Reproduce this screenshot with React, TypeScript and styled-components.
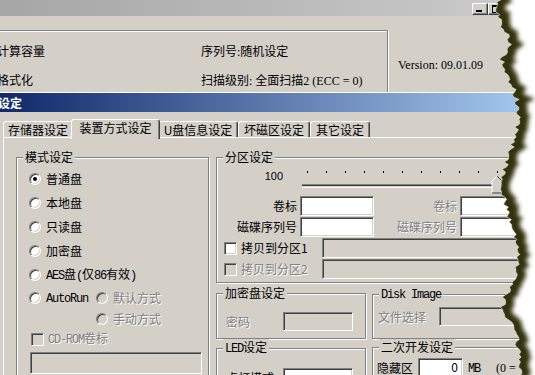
import React from "react";
import styled, { createGlobalStyle, css } from "styled-components";

const CJK = `"Noto Sans CJK SC", "Liberation Sans", sans-serif`;
const SERIF = `"Liberation Serif", "Noto Sans CJK SC", serif`;

const GlobalStyle = createGlobalStyle`
  html, body { margin: 0; padding: 0; background: #fff; overflow: hidden; }
  #root { width: 535px; height: 375px; }
`;

const dim = css`
  color: #808080;
  text-shadow: 1px 1px 0 #fff;
`;

const Screen = styled.div`
  position: relative;
  width: 535px;
  height: 375px;
  overflow: hidden;
  background: #d4d0c8;
  display: flex;
  flex-direction: column;
  font-family: ${CJK};
  font-size: 12px;
  line-height: 16px;
  color: #000;
`;

/* ---- background window ---- */
const AppTitle = styled.div`
  flex-shrink: 0;
  height: 16px;
  background: linear-gradient(to right, #a6a6a6, #c8c8c8 90%);
  display: flex;
  justify-content: flex-end;
  align-items: flex-start;
  padding: 3px 31px 0 0;
  box-sizing: border-box;
`;

const CaptionButton = styled.div<{ $kind: "min" | "max" }>`
  box-sizing: border-box;
  width: 16px;
  height: 12px;
  background: #d4d0c8;
  border: 1px solid;
  border-color: #fff #404040 #404040 #fff;
  box-shadow: inset -1px -1px 0 #808080;
  position: relative;
  &::after {
    content: "";
    position: absolute;
    ${({ $kind }) =>
      $kind === "min"
        ? css`left: 3px; bottom: 2px; width: 6px; height: 2px; background: #000;`
        : css`left: 3px; top: 1px; width: 6px; height: 5px; border: 1px solid #000; border-top-width: 2px;`}
  }
`;

const InfoArea = styled.div`
  flex-shrink: 0;
  height: 76px;
  display: flex;
  align-items: flex-start;
  font-family: ${SERIF};
`;

const InfoFrame = styled.div`
  box-sizing: border-box;
  margin: 14px 0 0 -9px;
  width: 397px;
  height: 62px;
  border: 1px solid #808080;
  border-bottom: none;
  box-shadow: inset 1px 1px 0 #fff, 1px 0 0 #fff;
  display: grid;
  grid-template-columns: 204px 1fr;
  row-gap: 13px;
  align-content: start;
  padding: 13px 0 0 5px;
  white-space: nowrap;
`;

const Version = styled.div`
  margin: 41px 0 0 10px;
  white-space: nowrap;
`;

/* ---- dialog ---- */
const Dialog = styled.div`
  flex: 1;
  display: flex;
  flex-direction: column;
  border-top: 1px solid #fff;
  min-height: 0;
`;

const DialogCaption = styled.div`
  flex-shrink: 0;
  height: 19px;
  background: linear-gradient(to right, #10286a, #a6caf0);
  color: #fff;
  font-weight: bold;
  line-height: 19px;
  text-indent: -2px;
`;

const DialogBody = styled.div`
  flex: 1;
  display: flex;
  flex-direction: column;
  padding: 7px 0 0 3px;
  min-height: 0;
`;

const TabRow = styled.div`
  display: flex;
  align-items: flex-end;
  height: 18px;
  flex-shrink: 0;
`;

const Tab = styled.div<{ $w: number; $active?: boolean }>`
  box-sizing: border-box;
  width: ${({ $w, $active }) => ($active ? $w + 4 : $w)}px;
  height: ${({ $active }) => ($active ? 20 : 16)}px;
  margin: ${({ $active }) => ($active ? "0 -2px -2px" : "0")};
  position: relative;
  z-index: ${({ $active }) => ($active ? 1 : 0)};
  background: #d4d0c8;
  border: 1px solid;
  border-bottom: none;
  border-color: #fff #404040 transparent #fff;
  box-shadow: inset -1px 0 0 #808080;
  border-radius: 3px 3px 0 0;
  text-align: center;
  line-height: 16px;
  white-space: nowrap;
`;

const Panel = styled.div`
  flex: 1;
  border-top: 1px solid #fff;
  border-left: 1px solid #fff;
  margin-right: -100px;
  padding: 11px 0 0 12px;
  display: grid;
  grid-template-columns: 193px 1fr;
  column-gap: 7px;
  align-items: start;
`;

const Group = styled.fieldset<{ $h: number }>`
  box-sizing: border-box;
  margin: 0;
  padding: 0;
  min-width: 0;
  height: ${({ $h }) => $h}px;
  border: 1px solid #808080;
  box-shadow: inset 1px 1px 0 #fff, 1px 1px 0 #fff;
`;

const Legend = styled.legend`
  margin-left: 6px;
  padding: 0 2px;
  background: #d4d0c8;
  line-height: 16px;
  white-space: nowrap;
`;

const Mono = styled.span`
  font-family: "Liberation Mono", monospace;
  font-size: 12px;
  letter-spacing: -1.2px;
`;

const Text = styled.span<{ $disabled?: boolean }>`
  white-space: nowrap;
  ${({ $disabled }) => $disabled && dim}
`;

/* mode group */
const ModeBody = styled.div`
  display: flex;
  flex-direction: column;
  padding: 2px 6px 0 12px;
`;

const OptionRow = styled.div<{ $h?: number; $indent?: number }>`
  display: flex;
  align-items: center;
  height: ${({ $h }) => $h ?? 24}px;
  padding-left: ${({ $indent }) => $indent ?? 0}px;
  white-space: nowrap;
`;

const Radio = styled.span<{ $checked?: boolean; $disabled?: boolean; $gap?: number }>`
  box-sizing: border-box;
  flex-shrink: 0;
  width: 12px;
  height: 12px;
  border-radius: 50%;
  margin-left: ${({ $gap }) => $gap ?? 0}px;
  margin-right: 5px;
  background: ${({ $disabled }) => ($disabled ? "#d4d0c8" : "#fff")};
  border: 1px solid;
  border-color: #808080 #fff #fff #808080;
  box-shadow: inset 1px 1px 0 #404040, inset -1px -1px 0 #d4d0c8;
  display: flex;
  align-items: center;
  justify-content: center;
  &::after {
    content: "";
    width: 4px;
    height: 4px;
    border-radius: 50%;
    background: #000;
    display: ${({ $checked }) => ($checked ? "block" : "none")};
  }
`;

const Check = styled.span<{ $disabled?: boolean }>`
  box-sizing: border-box;
  flex-shrink: 0;
  width: 13px;
  height: 13px;
  margin-right: 4px;
  background: ${({ $disabled }) => ($disabled ? "#d4d0c8" : "#fff")};
  border: 1px solid;
  border-color: #808080 #fff #fff #808080;
  box-shadow: inset 1px 1px 0 #404040, inset -1px -1px 0 #d4d0c8;
`;

const Edit = styled.div<{ $w: number; $h?: number; $disabled?: boolean }>`
  box-sizing: border-box;
  flex-shrink: 0;
  width: ${({ $w }) => $w}px;
  height: ${({ $h }) => $h ?? 20}px;
  background: ${({ $disabled }) => ($disabled ? "#d4d0c8" : "#fff")};
  border: 1px solid;
  border-color: #808080 #fff #fff #808080;
  box-shadow: inset 1px 1px 0 #404040, inset -1px -1px 0 #d4d0c8;
  text-align: right;
  padding: 0 4px;
  line-height: 16px;
`;

const CdRomBox = styled(Edit)`
  margin: 3px 0 0 1px;
`;

/* right column */
const RightCol = styled.div`
  display: flex;
  flex-direction: column;
`;

const PartBody = styled.div`
  display: flex;
  flex-direction: column;
  padding-left: 5px;
`;

const SliderRow = styled.div`
  display: flex;
  align-items: flex-start;
  height: 31px;
`;

const SliderValue = styled.span`
  width: 61px;
  padding-top: 3px;
  text-align: right;
  font-family: "Liberation Sans", sans-serif;
  font-size: 11px;
`;

const SliderSvg = styled.svg`
  margin-left: 15px;
  flex-shrink: 0;
`;

const FieldRow = styled.div`
  display: flex;
  align-items: center;
  height: 20px;
  margin-bottom: 1px;
`;

const FieldLabel = styled.span<{ $w: number; $disabled?: boolean }>`
  width: ${({ $w }) => $w}px;
  flex-shrink: 0;
  box-sizing: border-box;
  text-align: right;
  padding-right: 3px;
  white-space: nowrap;
  ${({ $disabled }) => $disabled && dim}
`;

const CopyLabel = styled.div`
  display: flex;
  align-items: center;
  width: 98px;
  padding-left: 2px;
  flex-shrink: 0;
`;

const PairRow = styled.div`
  display: grid;
  grid-template-columns: 150px 1fr;
  column-gap: 6px;
`;

const SmallBody = styled.div<{ $top: number; $left: number }>`
  display: flex;
  align-items: center;
  padding: ${({ $top, $left }) => `${$top}px 0 0 ${$left}px`};
  white-space: nowrap;
`;

const SideLabel = styled.span<{ $w: number; $disabled?: boolean }>`
  width: ${({ $w }) => $w}px;
  flex-shrink: 0;
  white-space: nowrap;
  ${({ $disabled }) => $disabled && dim}
`;

const Unit = styled.span`
  margin-left: 5px;
  white-space: nowrap;
`;

const Hint = styled.span`
  margin-left: 16px;
  font-family: ${SERIF};
  white-space: nowrap;
`;

const TearSvg = styled.svg`
  position: absolute;
  top: 0;
  right: 0;
  pointer-events: none;
`;

const tabs = [
  { label: "存储器设定", w: 70 },
  { label: "装置方式设定", w: 85, active: true },
  { label: "U盘信息设定", w: 80 },
  { label: "坏磁区设定", w: 72 },
  { label: "其它设定", w: 60 },
];

// x position of the torn edge along y (page coordinates)
const tearCtrl: [number, number][] = [
  [0, 500], [15, 497], [30, 505], [45, 509], [60, 502], [75, 507], [90, 514],
  [110, 519], [130, 516], [150, 511], [170, 504], [185, 499], [200, 504],
  [220, 510], [240, 515], [260, 518], [280, 514], [295, 506], [308, 501],
  [325, 512], [345, 518], [365, 521], [375, 519],
];

function tearPoints(offsetX: number) {
  const pts: string[] = [];
  for (let y = -3; y <= 378; y += 2.5) {
    let i = 0;
    while (i < tearCtrl.length - 2 && tearCtrl[i + 1][0] < y) i++;
    const [y0, x0] = tearCtrl[i];
    const [y1, x1] = tearCtrl[i + 1];
    const t = Math.min(1, Math.max(0, (y - y0) / (y1 - y0)));
    const h = Math.sin(y * 12.9898) * 43758.5453;
    const r = h - Math.floor(h);
    pts.push(`${(x0 + (x1 - x0) * t + (r - 0.5) * 6 - offsetX).toFixed(1)},${y}`);
  }
  return pts;
}

const TornEdge = () => {
  const left = 465;
  const pts = tearPoints(left);
  const region = `M${pts.join(" L")} L80,378 L80,-3 Z`;
  return (
    <TearSvg width={70} height={375} viewBox="0 0 70 375">
      <defs>
        <clipPath id="paper">
          <path d={region} />
        </clipPath>
        <filter id="soft" x="-50%" y="-5%" width="200%" height="110%">
          <feGaussianBlur stdDeviation="2.2" />
        </filter>
      </defs>
      <g clipPath="url(#paper)">
        <rect x="0" y="0" width="70" height="375" fill="#fff" />
        <polyline
          points={pts.join(" ")}
          fill="none"
          stroke="#33310c"
          strokeWidth="11"
          transform="translate(3,0)"
          filter="url(#soft)"
        />
      </g>
      <polyline points={pts.join(" ")} fill="none" stroke="#e9e8e2" strokeWidth="0.8" opacity="0.6" />
    </TearSvg>
  );
};

const Slider = () => {
  const ticks = Array.from({ length: 11 }, (_, i) => 9 + i * 19);
  return (
    <SliderSvg width={230} height={30} viewBox="0 0 230 30">
      {ticks.map((x) => (
        <rect key={x} x={x} y={6} width={1} height={2} fill="#000" />
      ))}
      <rect x={4} y={19} width={191} height={1} fill="#808080" />
      <rect x={4} y={20} width={191} height={1} fill="#404040" />
      <rect x={4} y={22} width={191} height={1} fill="#fff" />
      <path d="M194,16 L199,11 L204,16 L204,28 L194,28 Z" fill="#d4d0c8" />
      <path d="M194,28 L194,16 L199,11" fill="none" stroke="#fff" strokeWidth="1" />
      <path d="M199,11 L204,16 L204,28 L194,28" fill="none" stroke="#404040" strokeWidth="1" />
    </SliderSvg>
  );
};

export default function App() {
  return (
    <>
      <GlobalStyle />
      <Screen>
        <AppTitle>
          <CaptionButton $kind="min" />
          <CaptionButton $kind="max" />
        </AppTitle>

        <InfoArea>
          <InfoFrame>
            <span>计算容量</span>
            <span>序列号:随机设定</span>
            <span>格式化</span>
            <span>扫描级别: 全面扫描2 (ECC = 0)</span>
          </InfoFrame>
          <Version>Version: 09.01.09</Version>
        </InfoArea>

        <Dialog>
          <DialogCaption>设定</DialogCaption>
          <DialogBody>
            <TabRow>
              {tabs.map((t) => (
                <Tab key={t.label} $w={t.w} $active={t.active}>
                  {t.label}
                </Tab>
              ))}
            </TabRow>

            <Panel>
              <Group $h={240}>
                <Legend>模式设定</Legend>
                <ModeBody>
                  <OptionRow><Radio $checked /><Text>普通盘</Text></OptionRow>
                  <OptionRow><Radio /><Text>本地盘</Text></OptionRow>
                  <OptionRow><Radio /><Text>只读盘</Text></OptionRow>
                  <OptionRow><Radio /><Text>加密盘</Text></OptionRow>
                  <OptionRow>
                    <Radio />
                    <Text><Mono>AES</Mono>盘<Mono>(</Mono>仅<Mono>86</Mono>有效<Mono>)</Mono></Text>
                  </OptionRow>
                  <OptionRow $h={22}>
                    <Radio />
                    <Text><Mono>AutoRun</Mono></Text>
                    <Radio $disabled $gap={8} />
                    <Text $disabled>默认方式</Text>
                  </OptionRow>
                  <OptionRow $h={20} $indent={67}>
                    <Radio $disabled />
                    <Text $disabled>手动方式</Text>
                  </OptionRow>
                  <OptionRow $h={20} $indent={2}>
                    <Check $disabled />
                    <Text $disabled><Mono>CD-ROM</Mono>卷标</Text>
                  </OptionRow>
                  <CdRomBox $w={172} $h={22} $disabled />
                </ModeBody>
              </Group>

              <RightCol>
                <Group $h={134} style={{ marginBottom: 2 }}>
                  <Legend>分区设定</Legend>
                  <PartBody>
                    <SliderRow>
                      <SliderValue>100</SliderValue>
                      <Slider />
                    </SliderRow>
                    <FieldRow>
                      <FieldLabel $w={78}>卷标</FieldLabel>
                      <Edit $w={74} />
                      <FieldLabel $w={86} $disabled>卷标</FieldLabel>
                      <Edit $w={90} />
                    </FieldRow>
                    <FieldRow>
                      <FieldLabel $w={78}>磁碟序列号</FieldLabel>
                      <Edit $w={74} />
                      <FieldLabel $w={86} $disabled>磁碟序列号</FieldLabel>
                      <Edit $w={90} />
                    </FieldRow>
                    <FieldRow>
                      <CopyLabel><Check /><Text>拷贝到分区1</Text></CopyLabel>
                      <Edit $w={260} $disabled />
                    </FieldRow>
                    <FieldRow>
                      <CopyLabel><Check $disabled /><Text $disabled>拷贝到分区2</Text></CopyLabel>
                      <Edit $w={260} $disabled />
                    </FieldRow>
                  </PartBody>
                </Group>

                <PairRow>
                  <Group $h={54}>
                    <Legend>加密盘设定</Legend>
                    <SmallBody $top={11} $left={9}>
                      <SideLabel $w={57} $disabled>密码</SideLabel>
                      <Edit $w={70} $h={19} $disabled />
                    </SmallBody>
                  </Group>
                  <Group $h={54}>
                    <Legend><Mono>Disk Image</Mono></Legend>
                    <SmallBody $top={4} $left={5}>
                      <SideLabel $w={61} $disabled>文件选择</SideLabel>
                      <Edit $w={120} $h={19} $disabled />
                    </SmallBody>
                  </Group>
                </PairRow>

                <PairRow>
                  <Group $h={60}>
                    <Legend><Mono>LED</Mono>设定</Legend>
                    <SmallBody $top={11} $left={9}>
                      <SideLabel $w={57}>点灯模式</SideLabel>
                      <Edit $w={70} $h={19} />
                    </SmallBody>
                  </Group>
                  <Group $h={60}>
                    <Legend>二次开发设定</Legend>
                    <SmallBody $top={3} $left={4}>
                      <SideLabel $w={41}>隐藏区</SideLabel>
                      <Edit $w={45} $h={19}>0</Edit>
                      <Unit><Mono>MB</Mono></Unit>
                      <Hint>(0 = </Hint>
                    </SmallBody>
                  </Group>
                </PairRow>
              </RightCol>
            </Panel>
          </DialogBody>
        </Dialog>

        <TornEdge />
      </Screen>
    </>
  );
}
